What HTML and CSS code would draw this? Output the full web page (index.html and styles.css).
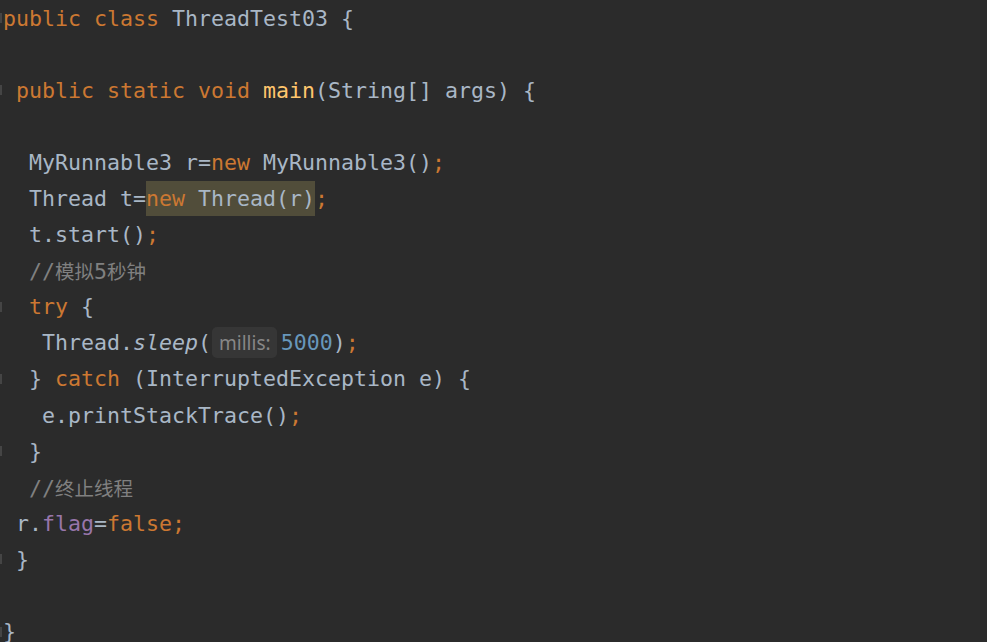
FILE: index.html
```html
<!DOCTYPE html>
<html>
<head>
<meta charset="utf-8">
<link rel="stylesheet" href="styles.css">
</head>
<body>
<div class="editor">
  <div class="line"><span class="gut"><i class="fold"></i></span><span class="code"><span class="kw">public class </span><span class="id">ThreadTest03 {</span></span></div>
  <div class="line"><span class="gut"></span><span class="code"></span></div>
  <div class="line"><span class="gut"><i class="fold"></i></span><span class="code"><span class="id"> </span><span class="kw">public static void </span><span class="fn">main</span><span class="id">(String[] args) {</span></span></div>
  <div class="line"><span class="gut"></span><span class="code"></span></div>
  <div class="line"><span class="gut"></span><span class="code"><span class="id">  MyRunnable3 r=</span><span class="kw">new </span><span class="id">MyRunnable3()</span><span class="kw">;</span></span></div>
  <div class="line"><span class="gut"></span><span class="code"><span class="id">  Thread t=</span><span class="hl"><span class="kw">new </span><span class="id">Thread(r)</span></span><span class="kw">;</span></span></div>
  <div class="line"><span class="gut"></span><span class="code"><span class="id">  t.start()</span><span class="kw">;</span></span></div>
  <div class="line"><span class="gut"></span><span class="code"><span class="cm">  //<span class="cjk">模拟</span>5<span class="cjk">秒钟</span></span></span></div>
  <div class="line"><span class="gut"><i class="fold"></i></span><span class="code"><span class="id">  </span><span class="kw">try </span><span class="id">{</span></span></div>
  <div class="line"><span class="gut"></span><span class="code"><span class="id">   Thread.<em class="it">sleep</em>(</span><span class="hint">millis:</span><span class="num">5000</span><span class="id">)</span><span class="kw">;</span></span></div>
  <div class="line"><span class="gut"><i class="fold"></i></span><span class="code"><span class="id">  } </span><span class="kw">catch </span><span class="id">(InterruptedException e) {</span></span></div>
  <div class="line"><span class="gut"></span><span class="code"><span class="id">   e.printStackTrace()</span><span class="kw">;</span></span></div>
  <div class="line"><span class="gut"><i class="fold"></i></span><span class="code"><span class="id">  }</span></span></div>
  <div class="line"><span class="gut"></span><span class="code"><span class="cm">  //<span class="cjk">终止线程</span></span></span></div>
  <div class="line"><span class="gut"></span><span class="code"><span class="id"> r.</span><span class="field">flag</span><span class="id">=</span><span class="kw">false;</span></span></div>
  <div class="line"><span class="gut"><i class="fold"></i></span><span class="code"><span class="id"> }</span></span></div>
  <div class="line"><span class="gut"></span><span class="code"></span></div>
  <div class="line"><span class="gut"><i class="fold"></i></span><span class="code"><span class="id">}</span></span></div>
</div>
</body>
</html>
```

FILE: styles.css
```css
html, body {
  margin: 0;
  padding: 0;
  background: #2b2b2b;
  height: 100%;
  overflow: hidden;
}

.editor {
  display: flex;
  flex-direction: column;
  font-family: "DejaVu Sans Mono", "Liberation Mono", monospace;
  font-size: 21.6px;
  color: #a9b7c6;
}

.line {
  display: flex;
  align-items: center;
  height: 36.1px;
  white-space: pre;
}

.gut {
  width: 3px;
  height: 100%;
  display: flex;
  align-items: center;
  flex: none;
}

.fold {
  display: block;
  width: 2px;
  height: 10px;
  background: #454545;
}

.code {
  display: flex;
  align-items: center;
  height: 100%;
}

.kw { color: #cc7832; }
.id { color: #a9b7c6; }
.fn { color: #ffc66d; }
.num { color: #6897bb; }
.field { color: #9876aa; }
.cm { color: #808080; }
.it { font-style: italic; }

.cjk {
  font-family: "Noto Sans CJK SC", sans-serif;
  font-size: 19.5px;
}

.hl {
  background: #514d3a;
  display: flex;
  align-items: center;
  height: 35px;
}

.hint {
  font-family: "Noto Sans", "Open Sans", sans-serif;
  font-size: 19px;
  color: #878787;
  background: #363636;
  border-radius: 5px;
  height: 31px;
  display: flex;
  align-items: center;
  padding: 0 6px 0 7px;
  margin: 0 4px 0 1px;
}
```
